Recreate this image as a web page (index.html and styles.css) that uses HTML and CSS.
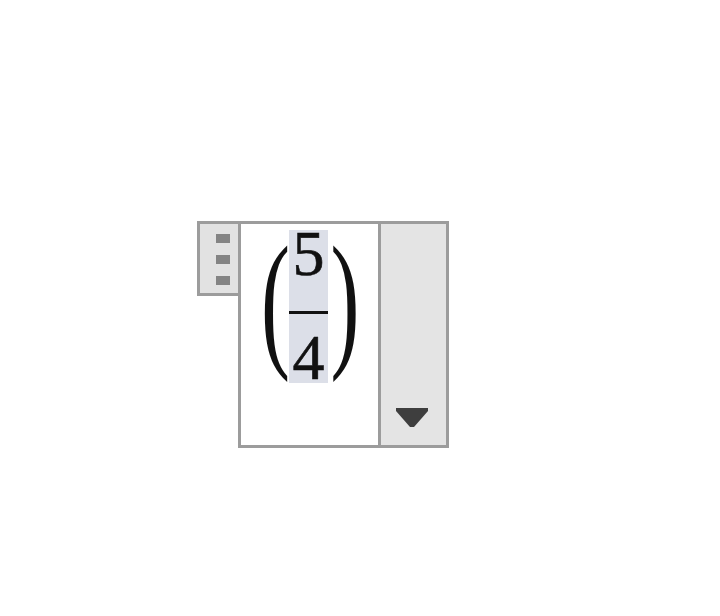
FILE: index.html
```html
<!DOCTYPE html>
<html>
<head>
<meta charset="utf-8">
<link rel="stylesheet" href="styles.css">
</head>
<body>
<div class="stage">
  <div class="handle">
    <span class="dot"></span>
    <span class="dot"></span>
    <span class="dot"></span>
  </div>
  <div class="box">
    <div class="content">
      <div class="math">
        <span class="paren paren-l">(</span>
        <div class="frac">
          <span class="num">5</span>
          <span class="bar"></span>
          <span class="den">4</span>
        </div>
        <span class="paren paren-r">)</span>
      </div>
    </div>
    <div class="drop">
      <svg class="arrow" width="32" height="19" viewBox="0 0 32 19">
        <polygon points="0,0 32,0 32,3 18,19 14,19 0,3" fill="#3e3e3e"/>
      </svg>
    </div>
  </div>
</div>
</body>
</html>
```
FILE: styles.css
```css
html, body {
  margin: 0;
  padding: 0;
  background: #ffffff;
}
.stage {
  display: flex;
  align-items: flex-start;
  padding: 221px 0 0 197px;
}
.handle {
  box-sizing: border-box;
  width: 41px;
  height: 75px;
  background: #e2e2e2;
  border: 3px solid #9c9c9c;
  border-right: none;
  display: flex;
  flex-direction: column;
  padding: 10px 0 0 16px;
  gap: 12px;
}
.dot {
  display: block;
  width: 14px;
  height: 9px;
  background: #848484;
}
.box {
  box-sizing: border-box;
  width: 211px;
  height: 227px;
  border: 3px solid #9c9c9c;
  display: flex;
  background: #ffffff;
}
.content {
  width: 137px;
  flex: none;
}
.math {
  display: flex;
  align-items: center;
  margin: 6px 0 0 18px;
  height: 153px;
  font-family: "Liberation Serif", "DejaVu Serif", serif;
  color: #111111;
}
.paren {
  display: block;
  flex: none;
  font-size: 60px;
  line-height: 60px;
  height: 60px;
  text-align: center;
  transform-origin: 50% 36px;
  transform: translateY(2px) scale(1.45, 2.5);
}
.paren-l {
  width: 30px;
  padding-left: 2px;
  box-sizing: border-box;
}
.paren-r {
  width: 34px;
}
.frac {
  flex: none;
  width: 39px;
  height: 153px;
  background: #dcdfe8;
  display: flex;
  flex-direction: column;
  align-items: center;
}
.num, .den {
  display: block;
  flex: none;
  font-size: 64px;
  line-height: 64px;
  height: 64px;
  -webkit-text-stroke: 0.6px #111111;
}
.num {
  margin-top: -8px;
}
.bar {
  display: block;
  flex: none;
  width: 39px;
  height: 3px;
  background: #111111;
  margin-top: 25px;
}
.den {
  margin-top: 12px;
}
.drop {
  flex: 1;
  border-left: 3px solid #9c9c9c;
  background: #e4e4e4;
  display: flex;
  flex-direction: column;
  justify-content: flex-end;
  align-items: center;
  padding-bottom: 18px;
}
.arrow {
  display: block;
  margin-right: 3px;
}
```
